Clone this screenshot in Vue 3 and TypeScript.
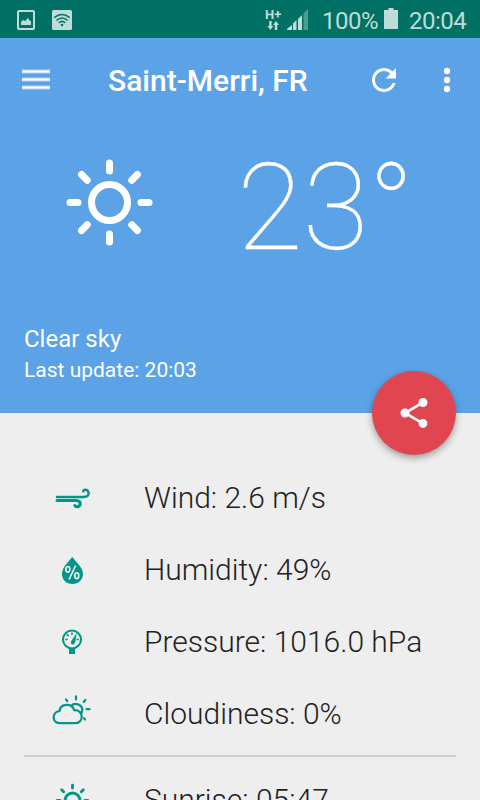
<script setup lang="ts">
interface Reading {
  icon: 'wind' | 'humidity' | 'pressure' | 'clouds'
  text: string
}

const readings: Reading[] = [
  { icon: 'wind', text: 'Wind: 2.6 m/s' },
  { icon: 'humidity', text: 'Humidity: 49%' },
  { icon: 'pressure', text: 'Pressure: 1016.0 hPa' },
  { icon: 'clouds', text: 'Cloudiness: 0%' },
]

const rays: number[] = [0, 45, 90, 135, 180, 225, 270, 315]
</script>

<template>
  <div class="screen">
    <div class="status">
      <svg class="s-image" width="18" height="20" viewBox="0 0 18 20">
        <rect x="1" y="1" width="16" height="18" rx="1" fill="none" stroke="#bfdcd8" stroke-width="2" />
        <path d="M4 15v-3l2-2 2 1 3-3 2 3 1 0v4z" fill="#bfdcd8" />
      </svg>
      <svg class="s-wifi" width="20" height="20" viewBox="0 0 20 20">
        <rect width="20" height="20" rx="1.5" fill="#bfdcd8" />
        <g fill="none" stroke="#007164" stroke-width="1.500">
          <path d="M2.300 7.600Q10 1.600 17.700 7.600" />
          <path d="M4.500 10.300Q10 5.700 15.500 10.300" />
          <path d="M6.700 12.800Q10 10 13.300 12.800" />
        </g>
        <circle cx="10" cy="15" r="1.300" fill="#007164" />
      </svg>
      <div class="s-net">
        <span class="s-hplus">H+</span>
        <svg width="12" height="9" viewBox="0 0 12 9" fill="#bfdcd8">
          <path d="M2.200 0h2.400v5h1.800L3.400 9 .4 5h1.800zM7.800 9h2.400V4H12L9 0 6 4h1.800z" />
        </svg>
      </div>
      <svg class="s-signal" width="22" height="21" viewBox="0 0 22 21">
        <path d="M0 21V20L5 16V21zM6 21V14.500L9.500 11V21zM11 21V10L15 6V21z" fill="#bfdcd8" />
        <path d="M16.500 21V4.500L21 0V21z" fill="#4b9c92" />
      </svg>
      <span class="s-percent">100%</span>
      <svg class="s-battery" width="14" height="21" viewBox="0 0 14 21">
        <path d="M0 2h4.500V0h5v2H14v19H0z" fill="#bfdcd8" />
      </svg>
      <span class="s-time">20:04</span>
    </div>

    <header class="hero">
      <div class="toolbar">
        <svg class="menu" width="28" height="21" viewBox="0 0 28 21">
          <path d="M0 2.500h28M0 10.500h28M0 18.500h28" stroke="#fff" stroke-opacity=".55" stroke-width="4" />
          <path d="M0 2.500h28M0 10.500h28M0 18.500h28" stroke="#fff" stroke-width="2" />
        </svg>
        <h1 class="title">Saint-Merri, FR</h1>
        <svg class="refresh" width="36" height="36" viewBox="0 0 24 24" fill="#fff">
          <path d="M17.650 6.350C16.200 4.900 14.210 4 12 4c-4.420 0-7.990 3.580-7.990 8s3.570 8 7.990 8c3.730 0 6.840-2.550 7.730-6h-2.080c-.82 2.330-3.040 4-5.650 4-3.310 0-6-2.690-6-6s2.690-6 6-6c1.660 0 3.140.69 4.220 1.780L13 11h7V4l-2.350 2.350z" />
        </svg>
        <svg class="more" width="36" height="36" viewBox="0 0 24 24" fill="#fff">
          <circle cx="12" cy="6" r="2.100" /><circle cx="12" cy="12" r="2.100" /><circle cx="12" cy="18" r="2.100" />
        </svg>
      </div>

      <div class="current">
        <svg class="sun" width="88" height="88" viewBox="-44.500 -43.500 88 88" fill="none" stroke="#fff" stroke-width="7">
          <circle r="18" />
          <path v-for="r in rays" :key="r" d="M0-39.500V-31.500" stroke-linecap="round" :transform="`rotate(${r})`" />
        </svg>
        <span class="temp">23°</span>
      </div>

      <div class="summary">
        <div class="condition">Clear sky</div>
        <div class="updated">Last update: 20:03</div>
      </div>

      <button class="fab" aria-label="Share">
        <svg width="36" height="36" viewBox="0 0 24 24" fill="#fff">
          <path d="M18 16.080c-.76 0-1.440.3-1.960.77L8.910 12.700c.05-.23.09-.46.09-.7s-.04-.47-.09-.7l7.050-4.110c.54.5 1.250.81 2.040.81 1.660 0 3-1.340 3-3s-1.340-3-3-3-3 1.340-3 3c0 .24.040.47.090.7L8.040 9.810C7.500 9.310 6.790 9 6 9c-1.660 0-3 1.340-3 3s1.340 3 3 3c.79 0 1.500-.31 2.040-.81l7.120 4.160c-.05.21-.08.43-.08.650 0 1.610 1.310 2.920 2.920 2.920s2.920-1.310 2.920-2.920-1.310-2.920-2.920-2.920z" />
        </svg>
      </button>
    </header>

    <main class="details">
      <div v-for="item in readings" :key="item.icon" class="row">
        <div class="cell">
          <svg v-if="item.icon === 'wind'" width="48" height="48" viewBox="0 0.500 48 48" fill="none" stroke="#009688" stroke-linecap="round">
            <path d="M9 23.500H36Q40.700 23.300 40.700 19.500Q40 16.200 37.200 16.200Q35.500 16.200 35.300 17.800" stroke-width="2.400" />
            <path d="M9 27H28Q32.300 27.200 32.300 30.200Q32 33.300 29 33.300Q27.200 33.200 26.800 32" stroke-width="3" />
          </svg>
          <svg v-else-if="item.icon === 'humidity'" width="48" height="48" viewBox="0 0 48 48">
            <path d="M24.300 11Q20.500 15.500 17.500 19Q14 23.500 14 27.500C14 34 18.500 38 24.300 38S35 34 35 27.500Q34.800 23.500 31 19Q27.500 15 24.300 11z" fill="#009688" />
            <g fill="none" stroke="#eee" stroke-width="1.700">
              <ellipse cx="19.800" cy="23.300" rx="2" ry="2.800" /><ellipse cx="28.800" cy="29.700" rx="2" ry="2.800" />
              <path d="M27.700 19.500L21 33.500" />
            </g>
          </svg>
          <svg v-else-if="item.icon === 'pressure'" width="48" height="48" viewBox="0 1 48 48">
            <circle cx="24" cy="22.500" r="9" fill="none" stroke="#009688" stroke-width="2.100" />
            <path d="M21 31h6v6h-6z" fill="#009688" />
            <path d="M24 15.500v2.500M17.200 22.500h2.500M28.500 22.500h2.300M18.800 17.500l2 1.500" stroke="#009688" stroke-width="1.600" />
            <path d="M28.800 16L27 26Q25 28.500 23.300 27Q22.500 25.500 23.200 24z" fill="#009688" />
          </svg>
          <svg v-else width="48" height="48" viewBox="0 3.500 48 48" fill="none" stroke="#009688" stroke-width="2.200">
            <path d="M11.500 36.700C3.500 36.300 4 25.500 11.500 24.500C12.500 16.800 23.500 16.300 26.200 23.600C36 23 36 36.500 27.500 36.700z" />
            <path d="M23 19.500C26.500 15.800 34.300 17.500 34.300 23.500Q34.200 26 32.600 27.600" />
            <path d="M28 9.800v3.200M35.700 15.500l1.700-2.200M38.500 22.700h3M36 31.700l1 1.300M19.200 14.500l-1.200-1.700" stroke-linecap="round" />
          </svg>
        </div>
        <span class="label">{{ item.text }}</span>
      </div>
      <hr class="rule" />
      <div class="row">
        <div class="cell">
          <svg width="48" height="48" viewBox="-24.500 -24.500 48 48" fill="none" stroke="#009688" stroke-width="2.900">
            <circle r="7.500" />
            <path v-for="r in rays" :key="r" d="M0-15.300V-12.500" stroke-linecap="round" :transform="`rotate(${r})`" />
          </svg>
        </div>
        <span class="label">Sunrise: 05:47</span>
      </div>
    </main>
  </div>
</template>

<style>
body {
  margin: 0;
  overflow: hidden;
}
</style>

<style scoped>
.screen {
  width: 480px;
  height: 800px;
  overflow: hidden;
  display: flex;
  flex-direction: column;
  background: #eee;
  font-family: Roboto, "Liberation Sans", sans-serif;
}
svg {
  display: block;
  flex: none;
}
.status {
  flex: none;
  height: 38px;
  box-sizing: border-box;
  display: flex;
  align-items: flex-start;
  background: #007164;
  color: #bfdcd8;
  font-size: 24px;
  line-height: 28px;
  letter-spacing: -0.5px;
  white-space: nowrap;
}
.s-image {
  margin: 10px 0 0 17px;
}
.s-wifi {
  margin: 10px 0 0 17px;
}
.s-net {
  width: 18px;
  margin: 9px 0 0 193px;
}
.s-net svg {
  margin: 1px 0 0 2px;
}
.s-hplus {
  display: block;
  font-size: 13px;
  font-weight: 700;
  line-height: 11px;
  letter-spacing: 0;
}
.s-signal {
  margin: 9px 0 0 4px;
}
.s-percent {
  width: 62px;
  margin: 7px 0 0 13px;
}
.s-battery {
  margin: 8px 0 0;
}
.s-time {
  margin: 7px 0 0 11px;
}
.hero {
  position: relative;
  flex: none;
  height: 375px;
  background: #5ca2e7;
  color: #fff;
}
.toolbar {
  height: 84px;
  display: flex;
  align-items: center;
}
.menu {
  margin: 0 0 2px 22px;
}
.title {
  width: 258px;
  margin: 2px 0 0 58px;
  font-size: 30px;
  font-weight: 500;
  line-height: 36px;
  white-space: nowrap;
}
.more {
  margin-left: 27px;
}
.current {
  height: 160px;
  display: flex;
}
.sun {
  margin: 37px 0 0 65px;
}
.temp {
  margin: 16px 0 0 84px;
  font-size: 120px;
  line-height: 140px;
  font-weight: 100;
  -webkit-text-stroke: 0.3px #fff;
}
.summary {
  padding: 42px 24px 0;
}
.condition {
  font-size: 24px;
  line-height: 30px;
}
.updated {
  font-size: 21px;
  line-height: 32px;
}
.fab {
  position: absolute;
  right: 24px;
  bottom: -42px;
  width: 84px;
  height: 84px;
  padding: 0;
  border: 0;
  border-radius: 50%;
  display: flex;
  align-items: center;
  justify-content: center;
  background: #e04650;
  box-shadow: 0 3px 7px rgba(0, 0, 0, 0.35);
}
.details {
  padding: 49px 24px 0;
}
.row {
  height: 72px;
  display: flex;
  align-items: center;
}
.cell {
  width: 96px;
  display: flex;
  justify-content: center;
}
.label {
  margin-left: 24px;
  color: #222;
  font-size: 30px;
  font-weight: 300;
  line-height: 36px;
  white-space: nowrap;
}
.rule {
  height: 2px;
  margin: 5px 0 7px;
  border: 0;
  background: #cdcfce;
}
</style>
